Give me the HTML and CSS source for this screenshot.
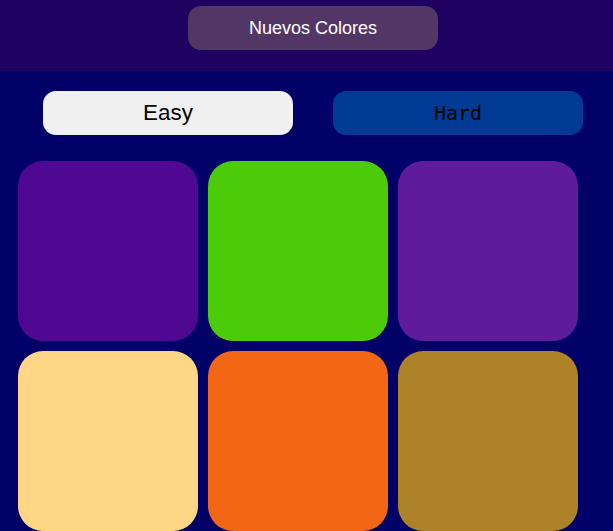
FILE: index.html
```html
<!DOCTYPE html>
<html>
<head>
<meta charset="utf-8">
<link rel="stylesheet" href="styles.css">
</head>
<body>
<header class="top">
  <button class="new-btn">Nuevos Colores</button>
</header>
<main class="game">
  <div class="modes">
    <button class="mode easy">Easy</button>
    <button class="mode hard">Hard</button>
  </div>
  <div class="grid">
    <div class="sq c1"></div>
    <div class="sq c2"></div>
    <div class="sq c3"></div>
    <div class="sq c4"></div>
    <div class="sq c5"></div>
    <div class="sq c6"></div>
  </div>
</main>
</body>
</html>
```
FILE: styles.css
```css
html, body {
  margin: 0;
  padding: 0;
  background: #000066;
  overflow: hidden;
  font-family: "Liberation Sans", Arial, sans-serif;
}
.top {
  background: #1e0060;
  height: 71px;
  box-sizing: border-box;
  padding: 6px 0 0 188px;
  display: flex;
  align-items: flex-start;
}
.new-btn {
  width: 250px;
  height: 44px;
  border: none;
  border-radius: 13px;
  background: #523766;
  color: #ffffff;
  font-family: "Liberation Sans", Arial, sans-serif;
  font-size: 18px;
  padding: 0;
}
.game {
  padding: 20px 0 0 0;
}
.modes {
  display: flex;
  gap: 40px;
  padding-left: 43px;
}
.mode {
  width: 250px;
  height: 44px;
  border: none;
  border-radius: 13px;
  padding: 0;
  color: #000;
}
.easy {
  background: #f0f0f0;
  font-family: "Liberation Sans", Arial, sans-serif;
  font-size: 22.4px;
}
.hard {
  background: #003a94;
  font-family: "DejaVu Sans Mono", monospace;
  font-size: 20px;
}
.grid {
  display: grid;
  grid-template-columns: repeat(3, 180px);
  grid-auto-rows: 180px;
  gap: 10px;
  padding-left: 18px;
  margin-top: 26px;
}
.sq {
  border-radius: 25px;
}
.c1 { background: #4f0892; }
.c2 { background: #4ccb08; }
.c3 { background: #5e1b9a; }
.c4 { background: #ffd685; }
.c5 { background: #f26716; }
.c6 { background: #ae8228; }
```
